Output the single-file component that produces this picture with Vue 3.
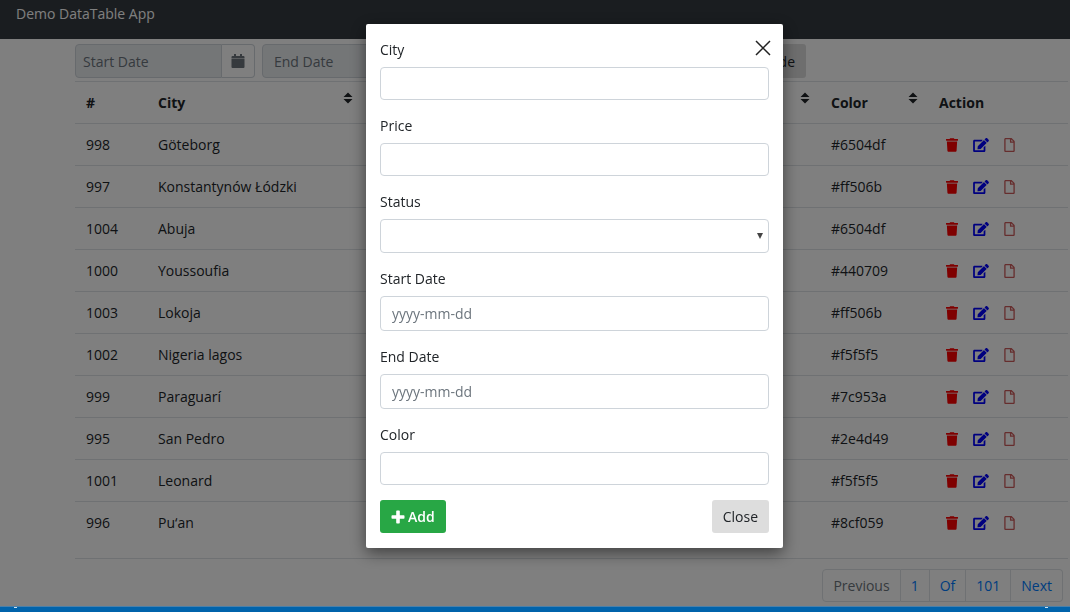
<script setup>
import { ref } from 'vue'

const rows = [
  { id: '998', city: 'Göteborg', color: '#6504df' },
  { id: '997', city: 'Konstantynów Łódzki', color: '#ff506b' },
  { id: '1004', city: 'Abuja', color: '#6504df' },
  { id: '1000', city: 'Youssoufia', color: '#440709' },
  { id: '1003', city: 'Lokoja', color: '#ff506b' },
  { id: '1002', city: 'Nigeria lagos', color: '#f5f5f5' },
  { id: '999', city: 'Paraguarí', color: '#7c953a' },
  { id: '995', city: 'San Pedro', color: '#2e4d49' },
  { id: '1001', city: 'Leonard', color: '#f5f5f5' },
  { id: '996', city: 'Pu‘an', color: '#8cf059' },
]
const form = ref({ city: '', price: '', status: '', start: '', end: '', color: '' })
</script>

<template>
  <div class="app">
    <nav class="navbar"><a href="#" class="brand">Demo DataTable App</a></nav>

    <main class="content">
      <div class="toolbar">
        <div class="date-group">
          <input type="text" class="filter" placeholder="Start Date" aria-label="Start Date">
          <button type="button" class="calendar" aria-label="Open calendar">
            <svg viewBox="0 0 14 14" width="14" height="14"><path d="M3 0h2v2h4V0h2v2h1.500a1 1 0 0 1 1 1v1H.5V3a1 1 0 0 1 1-1H3zM.5 4.500h13V13a1 1 0 0 1-1 1h-11a1 1 0 0 1-1-1z" /></svg>
          </button>
        </div>
        <input type="text" class="filter filter-end" placeholder="End Date" aria-label="End Date">
        <button type="button" class="btn btn-grey">Hide</button>
      </div>

      <table class="table">
        <colgroup>
          <col class="c-id"><col class="c-city"><col class="c-mid"><col class="c-color"><col>
        </colgroup>
        <thead>
          <tr>
            <th>#</th>
            <th v-for="name in ['City', '', 'Color']" :key="name">
              <div class="sortable">
                <span>{{ name }}</span>
                <svg class="sort" viewBox="0 0 10 12" width="10" height="12"><path d="M5 0.500 9.500 5H.5zM5 11.500 9.500 7H.5z" /></svg>
              </div>
            </th>
            <th>Action</th>
          </tr>
        </thead>
        <tbody>
          <tr v-for="row in rows" :key="row.id">
            <td>{{ row.id }}</td>
            <td>{{ row.city }}</td>
            <td></td>
            <td>{{ row.color }}</td>
            <td>
              <div class="actions">
                <button type="button" class="icon" aria-label="Delete">
                  <svg viewBox="0 0 448 512" width="12" height="14" fill="#f00"><path d="M432 32H312l-9-19c-4-8-12-13-22-13H167c-9 0-17 5-21 13l-10 19H16C7 32 0 39 0 48v32c0 9 7 16 16 16h416c9 0 16-7 16-16V48c0-9-7-16-16-16zM32 128l21 339c2 25 22 45 48 45h246c26 0 46-20 48-45l21-339z" /></svg>
                </button>
                <button type="button" class="icon" aria-label="Edit">
                  <svg viewBox="0 0 576 512" width="16" height="14" fill="#00f"><path d="M402.600 83.200l90.200 90.200c3.800 3.800 3.800 10 0 13.800L274.400 405.600l-92.800 10.300c-12.400 1.400-22.900-9.100-21.500-21.500l10.300-92.800L388.800 83.200c3.800-3.800 10-3.800 13.800 0zm162-22.900l-48.800-48.800c-15.200-15.200-39.900-15.200-55.200 0l-35.400 35.400c-3.800 3.800-3.800 10 0 13.800l90.200 90.200c3.800 3.800 10 3.800 13.800 0l35.400-35.400c15.200-15.300 15.200-40 0-55.200zM384 346.200V448H64V128h229.800c3.200 0 6.200-1.300 8.500-3.500l40-40c7.600-7.600 2.200-20.500-8.500-20.500H48C21.500 64 0 85.500 0 112v352c0 26.500 21.500 48 48 48h352c26.500 0 48-21.500 48-48V306.200c0-10.700-12.900-16-20.500-8.500l-40 40c-2.200 2.300-3.500 5.300-3.500 8.500z" /></svg>
                </button>
                <button type="button" class="icon" aria-label="Open file">
                  <svg viewBox="0 0 384 512" width="11" height="14" fill="#cd5c5c"><path d="M369.900 97.900L286 14C277 5 264.800 0 252.100 0H48C21.500 0 0 21.500 0 48v416c0 26.500 21.500 48 48 48h288c26.500 0 48-21.500 48-48V131.900c0-12.700-5.100-25-14.100-34zM332.100 128H256V51.900l76.100 76.100zM48 464V48h160v104c0 13.300 10.700 24 24 24h104v288H48z" /></svg>
                </button>
              </div>
            </td>
          </tr>
        </tbody>
      </table>

      <nav class="pagination" aria-label="Pages">
        <a href="#" class="muted">Previous</a>
        <a href="#">1</a>
        <a href="#">Of</a>
        <a href="#">101</a>
        <a href="#">Next</a>
      </nav>
    </main>

    <div class="overlay">
      <form class="modal" role="dialog" aria-label="Add record" @submit.prevent>
        <button type="button" class="close" aria-label="Close dialog">
          <svg viewBox="0 0 16 16" width="16" height="16"><path d="M1 1 15 15M15 1 1 15" fill="none" stroke="#222" stroke-width="1.500" /></svg>
        </button>
        <label for="city">City</label>
        <input id="city" v-model="form.city" type="text">
        <label for="price">Price</label>
        <input id="price" v-model="form.price" type="text">
        <label for="status">Status</label>
        <div class="select-wrap">
          <select id="status" v-model="form.status"><option value=""></option></select>
          <svg class="caret" viewBox="0 0 6 6" width="6" height="6"><path d="M0 0h6L3 6z" /></svg>
        </div>
        <label for="start">Start Date</label>
        <input id="start" v-model="form.start" class="tall" type="text" placeholder="yyyy-mm-dd">
        <label for="end">End Date</label>
        <input id="end" v-model="form.end" class="tall" type="text" placeholder="yyyy-mm-dd">
        <label for="color">Color</label>
        <input id="color" v-model="form.color" type="text">
        <div class="buttons">
          <button type="submit" class="btn btn-green">
            <svg viewBox="0 0 14 14" width="14" height="14"><path d="M6 .5h2q.8 0 .8.800v3.900h3.900q.8 0 .8.800v2q0 .8-.8.800H8.800v3.900q0 .8-.8.800H6q-.8 0-.8-.8V8.800H1.300Q.5 8.800.5 8V6q0-.8.800-.8h3.900V1.300Q5.200.5 6 .5z" /></svg>
            Add
          </button>
          <button type="button" class="btn btn-grey">Close</button>
        </div>
      </form>
    </div>

    <footer class="bar"><span></span><span></span></footer>
  </div>
</template>

<style>
body { margin: 0; }
</style>

<style scoped>
.app {
  min-height: 100vh;
  overflow: hidden;
  font: 14px/21px "Open Sans", "Noto Sans", sans-serif;
  color: #212529;
  background: #fff;
}
.app *, .app *::before { box-sizing: border-box; }
button, input, select { font: inherit; color: inherit; margin: 0; }
button { cursor: pointer; }
svg { display: block; }
a { text-decoration: none; }
.navbar { height: 39px; padding: 3px 16px; background: #343a40; }
.brand { color: #fff; }
.content { padding: 5px 2px 0 75px; }
.toolbar { display: flex; gap: 7px; max-width: 731px; height: 34px; }
.date-group { display: flex; width: 180px; }
.filter {
  width: 147px;
  border: 1px solid #ced4da;
  border-radius: 4px;
  padding: 0 7px;
  background: #e9ecef;
}
.filter::placeholder, .modal input::placeholder { color: #6c757d; opacity: 1; }
.date-group .filter { border-radius: 4px 0 0 4px; }
.filter-end { flex: 1; padding: 0 11px; }
.calendar {
  display: grid;
  place-items: center;
  flex: 1;
  padding: 0;
  border: 1px solid #ced4da;
  border-left: 0;
  border-radius: 0 4px 4px 0;
  background: #fff;
  fill: #6c757d;
}
.table {
  width: 100%;
  margin-top: 3px;
  border-collapse: separate;
  border-spacing: 0;
  table-layout: fixed;
  border-bottom: 1px solid #dee2e6;
  padding-bottom: 15px;
}
.c-id { width: 72px; }
.c-city { width: 216px; }
.c-mid { width: 457px; }
.c-color { width: 108px; }
.table th, .table td {
  height: 42px;
  padding: 0 10px 0 11px;
  border-top: 1px solid #dee2e6;
  text-align: left;
  white-space: nowrap;
}
.sortable { display: flex; justify-content: space-between; min-height: 21px; }
.sort { fill: #212529; }
.actions { display: flex; align-items: center; gap: 15px; padding-left: 7px; }
.icon { padding: 0; border: 0; background: none; }
.pagination { display: flex; justify-content: flex-end; margin: 10px 5px 0 0; }
.pagination a {
  padding: 5px 10px;
  border: 1px solid #dee2e6;
  border-left: 0;
  color: #007bff;
}
.pagination a:first-child { border-left: 1px solid #dee2e6; border-radius: 4px 0 0 4px; }
.pagination a:last-child { border-radius: 0 4px 4px 0; }
.pagination .muted { color: #6c757d; }
.overlay {
  position: fixed;
  inset: 0;
  display: flex;
  justify-content: center;
  align-items: flex-start;
  padding: 24px 0 0 79px;
  background: rgba(0, 0, 0, .5);
}
.modal {
  position: relative;
  width: 417px;
  max-width: 100%;
  padding: 15px 14px;
  background: #fff;
  border-radius: 2px;
  box-shadow: 0 5px 16px rgba(0, 0, 0, .5);
}
.close {
  position: absolute;
  top: 16px;
  right: 12px;
  padding: 0;
  border: 0;
  background: none;
}
.modal label { display: block; margin-bottom: 7px; line-height: 21px; }
.modal input, .modal select {
  display: block;
  width: 100%;
  height: 33px;
  margin-bottom: 15px;
  padding: 0 11px;
  border: 1px solid #ced4da;
  border-radius: 4px;
  background: #fff;
}
.modal .tall { height: 35px; }
.modal select { height: 34px; appearance: none; }
.select-wrap { position: relative; }
.caret { position: absolute; right: 6px; top: 14px; fill: #444; pointer-events: none; }
.buttons { display: flex; justify-content: space-between; }
.btn {
  display: flex;
  align-items: center;
  gap: 3px;
  padding: 6px 11px;
  border: 0;
  border-radius: 3px;
}
.btn-green { background: #28a745; color: #fff; fill: #fff; font-weight: 600; }
.btn-grey { background: #ddd; }
.bar {
  position: fixed;
  inset: auto 0 0;
  display: flex;
  justify-content: space-between;
  height: 6px;
  padding: 0 22px 0 14px;
  background: #0063ab;
  border-top: 1px solid #4a80aa;
}
.bar span { width: 3px; height: 1px; background: #cfe2f0; }
</style>
